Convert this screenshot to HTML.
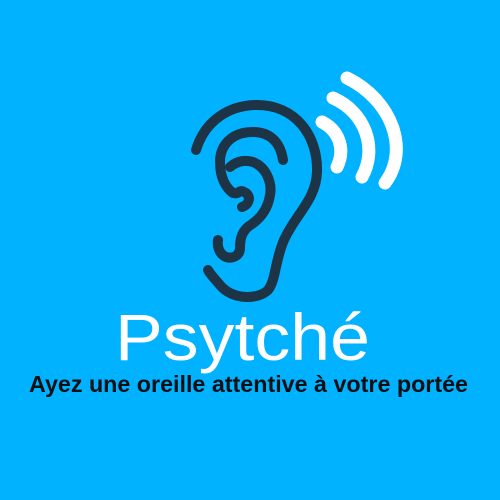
<!DOCTYPE html>
<html><head><meta charset="utf-8"><style>
html,body{margin:0;padding:0;background:#00b2ff;}
svg{display:block}
</style></head><body>
<svg width="500" height="500" viewBox="0 0 500 500" xmlns="http://www.w3.org/2000/svg">
<rect width="500" height="500" fill="#00b2ff"/>
<g fill="none" stroke="#1d3446" stroke-width="10" stroke-linecap="round" stroke-linejoin="round">
<path d="M196,150 C205,120 230,105 257,105 C295,105 318,135 317,172 C316,200 295,215 284,240 C275,260 276,280 268,290 C258,300 232,300 220,285 C214,278 210,274 208,270"/>
<path d="M283,160 C280,140 268,132 253,132 C232,132 220,145 220,162 C220,178 226,188 233,193 C240,195 238,188 246,193 C252,198 248,205 242,207"/>
<path d="M230,167 C238,160 247,160 253,162 C268,168 272,185 270,195 C268,208 262,217 252,224 C242,230 240,238 240,248 C240,256 232,259 226,257 C219,254 217,246 218,240"/>
</g>
<g fill="none" stroke="#ffffff" stroke-width="13" stroke-linecap="round">
<path d="M322,122 C338,130 346,148 337,167"/>
<path d="M333,98 C365,112 378,148 362,177"/>
<path d="M347,78 C392,100 410,150 385,183"/>
</g>
<text x="115" y="360" textLength="255" lengthAdjust="spacingAndGlyphs" font-family="Liberation Sans, sans-serif" font-size="66" fill="#ffffff" font-weight="300">Psytché</text>
<text x="29" y="392" textLength="439" lengthAdjust="spacingAndGlyphs" font-family="Liberation Sans, sans-serif" font-size="23" font-weight="bold" fill="#0a0f14">Ayez une oreille attentive à votre portée</text>
</svg>
</body></html>
